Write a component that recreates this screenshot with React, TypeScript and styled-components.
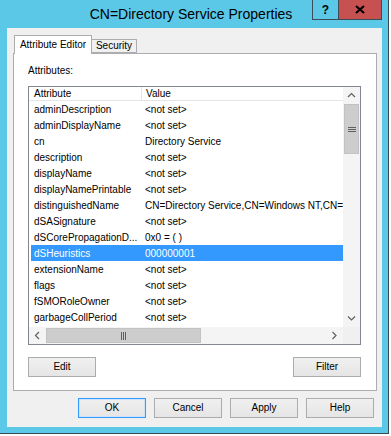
import styled, {createGlobalStyle} from 'styled-components';

const GlobalStyle = createGlobalStyle`
  html, body {
    margin: 0;
    padding: 0;
    background: #ffffff;
  }
  body {
    font-family: 'Liberation Sans', Arial, sans-serif;
    font-size: 10px;
    color: #000;
  }
`;

const FRAME = '#5bc8e8';

const Window = styled.div`
  width: 389px;
  height: 434px;
  box-sizing: border-box;
  background: ${FRAME};
  border-right: 1px solid #3b4a52;
  border-bottom: 1px solid #3b4a52;
  display: flex;
  flex-direction: column;
`;

const TitleBar = styled.div`
  height: 28px;
  display: grid;
  grid-template-columns: 1fr auto 1fr;
  align-items: start;
  padding-right: 6px;
`;

const Title = styled.div`
  font-size: 14px;
  line-height: 28px;
  color: #000;
  white-space: nowrap;
`;

const Caption = styled.div`
  display: flex;
  justify-self: end;
`;

const CaptionButton = styled.div<{close?: boolean}>`
  width: ${({close}) => (close ? '43px' : '27px')};
  height: 20px;
  box-sizing: border-box;
  background: ${({close}) => (close ? '#c75050' : FRAME)};
  border: 1px solid #3c4c56;
  border-top: none;
  border-left: ${({close}) => (close ? 'none' : '1px solid #3c4c56')};
  display: flex;
  align-items: center;
  justify-content: center;
  font-weight: bold;
  font-size: 12px;
  color: #000;
`;

const Client = styled.div`
  margin: 0 6px 6px 7px;
  flex: 1;
  background: #f0f0f0;
  padding: 7px 5px 0 6px;
  box-sizing: border-box;
  display: flex;
  flex-direction: column;
`;

const TabStrip = styled.div`
  height: 18px;
  display: flex;
  align-items: flex-end;
  padding-left: 1px;
`;

const Tab = styled.div<{active?: boolean}>`
  box-sizing: border-box;
  height: ${({active}) => (active ? '19px' : '14px')};
  margin-bottom: ${({active}) => (active ? '-1px' : '0')};
  position: relative;
  z-index: ${({active}) => (active ? 2 : 1)};
  padding: 0 6px;
  width: ${({active}) => (active ? '78px' : '45px')};
  background: ${({active}) => (active ? '#ffffff' : '#f0f0f0')};
  border: 1px solid #adadad;
  border-bottom: ${({active}) => (active ? 'none' : '1px solid #adadad')};
  border-left: ${({active}) => (active ? '1px solid #adadad' : 'none')};
  display: flex;
  align-items: center;
  justify-content: center;
  white-space: nowrap;
  line-height: 12px;
`;

const Panel = styled.div`
  height: 338px;
  box-sizing: border-box;
  background: #ffffff;
  border: 1px solid #adadad;
  padding: 10px 15px 13px 14px;
  display: flex;
  flex-direction: column;
`;

const Label = styled.div`
  line-height: 14px;
  height: 14px;
  margin-bottom: 8px;
`;

const ListView = styled.div`
  height: 259px;
  box-sizing: border-box;
  border: 1px solid #828790;
  display: flex;
  flex-direction: column;
`;

const ListMain = styled.div`
  flex: 1;
  display: flex;
  min-height: 0;
`;

const ListBody = styled.div`
  flex: 1;
  overflow: hidden;
  display: flex;
  flex-direction: column;
`;

const HeaderRow = styled.div`
  height: 14px;
  flex: none;
  display: grid;
  grid-template-columns: 113px 1fr;
  border-bottom: 1px solid #e5e5e5;
  box-sizing: border-box;
`;

const HeaderCell = styled.div<{last?: boolean}>`
  padding-left: ${({last}) => (last ? '4px' : '5px')};
  line-height: 13px;
  border-right: ${({last}) => (last ? 'none' : '1px solid #e5e5e5')};
  white-space: nowrap;
`;

const Row = styled.div<{selected?: boolean}>`
  height: 16px;
  flex: none;
  margin-left: 2px;
  display: grid;
  grid-template-columns: 111px 1fr;
  background: ${({selected}) => (selected ? '#3399ff' : 'transparent')};
  color: ${({selected}) => (selected ? '#ffffff' : '#000000')};
`;

const Cell = styled.div`
  padding-left: 3px;
  line-height: 17px;
  white-space: nowrap;
  overflow: hidden;
`;

const VScroll = styled.div`
  width: 17px;
  background: #f4f4f4;
  display: flex;
  flex-direction: column;
`;

const ArrowBox = styled.div`
  width: 17px;
  height: 17px;
  flex: none;
  display: flex;
  align-items: center;
  justify-content: center;
`;

const VTrack = styled.div`
  flex: 1;
  padding: 0 1px;
`;

const VThumb = styled.div`
  height: 50px;
  box-sizing: border-box;
  background: #cdcdcd;
  border: 1px solid #c2c2c2;
  display: flex;
  align-items: center;
  justify-content: center;
`;

const HScrollRow = styled.div`
  height: 17px;
  display: flex;
`;

const HScroll = styled.div`
  flex: 1;
  background: #f4f4f4;
  display: flex;
`;

const HTrack = styled.div`
  flex: 1;
  padding: 1px 0;
  display: flex;
`;

const HThumb = styled.div`
  width: 155px;
  box-sizing: border-box;
  background: #cdcdcd;
  border: 1px solid #c2c2c2;
  display: flex;
  align-items: center;
  justify-content: center;
`;

const Corner = styled.div`
  width: 17px;
  background: #f0f0f0;
`;

const ActionRow = styled.div`
  margin-top: 12px;
  display: flex;
  justify-content: space-between;
`;

const Button = styled.div<{primary?: boolean}>`
  width: 68px;
  height: 20px;
  box-sizing: border-box;
  background: linear-gradient(#f0f0f0, #e5e5e5);
  border: 1px solid ${({primary}) => (primary ? '#3399ff' : '#acacac')};
  box-shadow: ${({primary}) => (primary ? 'inset 0 0 0 1px #cce4f7' : 'none')};
  display: flex;
  align-items: center;
  justify-content: center;
  line-height: 12px;
`;

const DialogButtons = styled.div`
  margin-top: 7px;
  padding-right: 3px;
  display: flex;
  justify-content: flex-end;
  gap: 8px;
`;

const Chevron = ({dir}: {dir: 'up' | 'down' | 'left' | 'right'}) => {
  const pts = {
    up: '1,5 4.5,1.5 8,5',
    down: '1,1.5 4.5,5 8,1.5',
    left: '5,1 1.5,4.5 5,8',
    right: '1.5,1 5,4.5 1.5,8',
  }[dir];
  const vertical = dir === 'up' || dir === 'down';
  return (
    <svg width={vertical ? 9 : 7} height={vertical ? 7 : 9} viewBox={vertical ? '0 0 9 7' : '0 0 7 9'}>
      <polyline points={pts} fill="none" stroke="#606060" strokeWidth="1.2" />
    </svg>
  );
};

const Grip = ({vertical}: {vertical?: boolean}) =>
  vertical ? (
    <svg width="8" height="7" viewBox="0 0 8 7">
      <path d="M0 1.5h8M0 3.5h8M0 5.5h8" stroke="#606060" strokeWidth="1" />
    </svg>
  ) : (
    <svg width="7" height="8" viewBox="0 0 7 8">
      <path d="M1.5 0v8M3.5 0v8M5.5 0v8" stroke="#606060" strokeWidth="1" />
    </svg>
  );

const rows: [string, string][] = [
  ['adminDescription', '<not set>'],
  ['adminDisplayName', '<not set>'],
  ['cn', 'Directory Service'],
  ['description', '<not set>'],
  ['displayName', '<not set>'],
  ['displayNamePrintable', '<not set>'],
  ['distinguishedName', 'CN=Directory Service,CN=Windows NT,CN='],
  ['dSASignature', '<not set>'],
  ['dSCorePropagationD...', '0x0 = ( )'],
  ['dSHeuristics', '000000001'],
  ['extensionName', '<not set>'],
  ['flags', '<not set>'],
  ['fSMORoleOwner', '<not set>'],
  ['garbageCollPeriod', '<not set>'],
];

export default function App() {
  return (
    <>
      <GlobalStyle />
      <Window>
        <TitleBar>
          <span />
          <Title>CN=Directory Service Properties</Title>
          <Caption>
            <CaptionButton>?</CaptionButton>
            <CaptionButton close>
              <svg width="10" height="9" viewBox="0 0 10 9">
                <path d="M1 1l8 7M9 1l-8 7" stroke="#000" strokeWidth="2.2" />
              </svg>
            </CaptionButton>
          </Caption>
        </TitleBar>
        <Client>
          <TabStrip>
            <Tab active>Attribute Editor</Tab>
            <Tab>Security</Tab>
          </TabStrip>
          <Panel>
            <Label>Attributes:</Label>
            <ListView>
              <ListMain>
                <ListBody>
                  <HeaderRow>
                    <HeaderCell>Attribute</HeaderCell>
                    <HeaderCell last>Value</HeaderCell>
                  </HeaderRow>
                  {rows.map(([name, value]) => (
                    <Row key={name} selected={name === 'dSHeuristics'}>
                      <Cell>{name}</Cell>
                      <Cell>{value}</Cell>
                    </Row>
                  ))}
                </ListBody>
                <VScroll>
                  <ArrowBox>
                    <Chevron dir="up" />
                  </ArrowBox>
                  <VTrack>
                    <VThumb>
                      <Grip vertical />
                    </VThumb>
                  </VTrack>
                  <ArrowBox>
                    <Chevron dir="down" />
                  </ArrowBox>
                </VScroll>
              </ListMain>
              <HScrollRow>
                <HScroll>
                  <ArrowBox>
                    <Chevron dir="left" />
                  </ArrowBox>
                  <HTrack>
                    <HThumb>
                      <Grip />
                    </HThumb>
                  </HTrack>
                  <ArrowBox>
                    <Chevron dir="right" />
                  </ArrowBox>
                </HScroll>
                <Corner />
              </HScrollRow>
            </ListView>
            <ActionRow>
              <Button>Edit</Button>
              <Button>Filter</Button>
            </ActionRow>
          </Panel>
          <DialogButtons>
            <Button primary>OK</Button>
            <Button>Cancel</Button>
            <Button>Apply</Button>
            <Button>Help</Button>
          </DialogButtons>
        </Client>
      </Window>
    </>
  );
}
